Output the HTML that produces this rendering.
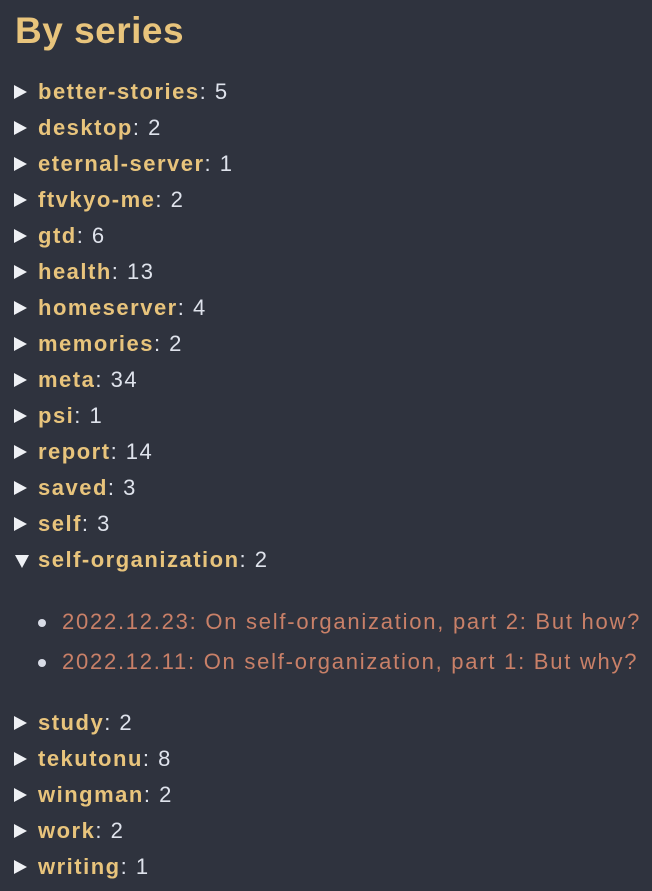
<!DOCTYPE html>
<html><head><style>
body{margin:0;background:#2f333e;width:652px;height:891px;overflow:hidden;font-family:"Liberation Sans",sans-serif;color:#dfe3ec}
h1{position:absolute;left:15px;top:10px;margin:0;font-size:37px;font-weight:bold;color:#e8c47c;letter-spacing:0.5px}
.r{position:absolute;left:38px;font-size:22px;line-height:24px;letter-spacing:1.5px;white-space:nowrap}
.r b{color:#e8c47c}
.r:before{content:"";position:absolute;left:-24px;top:5px;border-left:13px solid #eef0f4;border-top:7px solid transparent;border-bottom:7px solid transparent}
.r.o:before{left:-23px;top:7px;border-top:13px solid #eef0f4;border-left:7px solid transparent;border-right:7px solid transparent;border-bottom:0}
.li{position:absolute;left:38px;font-size:22px;line-height:24px;color:#c98068;white-space:nowrap;letter-spacing:1.75px}
.li:before{content:"";position:absolute;left:0;top:9px;width:8px;height:8px;border-radius:50%;background:#d8dce6}
.li span{margin-left:24px}
</style></head><body>
<h1>By series</h1>
<div class="r" style="top:80px"><b>better-stories</b>: 5</div>
<div class="r" style="top:116px"><b>desktop</b>: 2</div>
<div class="r" style="top:152px"><b>eternal-server</b>: 1</div>
<div class="r" style="top:188px"><b>ftvkyo-me</b>: 2</div>
<div class="r" style="top:224px"><b>gtd</b>: 6</div>
<div class="r" style="top:260px"><b>health</b>: 13</div>
<div class="r" style="top:296px"><b>homeserver</b>: 4</div>
<div class="r" style="top:332px"><b>memories</b>: 2</div>
<div class="r" style="top:368px"><b>meta</b>: 34</div>
<div class="r" style="top:404px"><b>psi</b>: 1</div>
<div class="r" style="top:440px"><b>report</b>: 14</div>
<div class="r" style="top:476px"><b>saved</b>: 3</div>
<div class="r" style="top:512px"><b>self</b>: 3</div>
<div class="r o" style="top:548px"><b>self-organization</b>: 2</div>
<div class="li" style="top:610px"><span>2022.12.23: On self-organization, part 2: But how?</span></div>
<div class="li" style="top:650px"><span>2022.12.11: On self-organization, part 1: But why?</span></div>
<div class="r" style="top:711px"><b>study</b>: 2</div>
<div class="r" style="top:747px"><b>tekutonu</b>: 8</div>
<div class="r" style="top:783px"><b>wingman</b>: 2</div>
<div class="r" style="top:819px"><b>work</b>: 2</div>
<div class="r" style="top:855px"><b>writing</b>: 1</div>
</body></html>
